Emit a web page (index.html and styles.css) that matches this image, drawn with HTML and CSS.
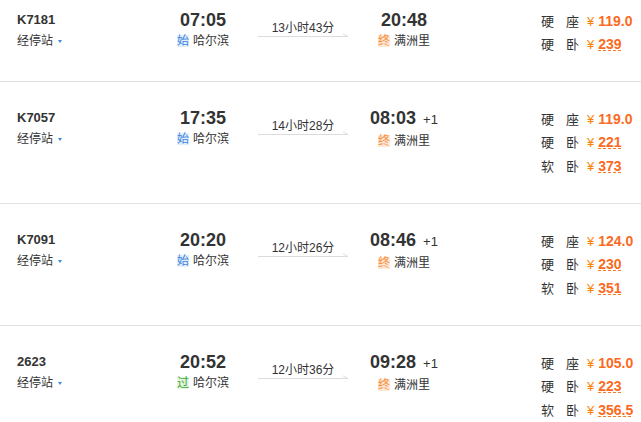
FILE: index.html
```html
<!DOCTYPE html>
<html lang="zh-CN">
<head>
<meta charset="utf-8">
<title>车次列表</title>
<link rel="stylesheet" href="styles.css">
</head>
<body>
<div class="list">

  <div class="row">
    <div class="train"><div class="num">K7181</div><div class="stops">经停站<span class="caret"></span></div></div>
    <div class="dep"><div class="time">07:05</div><div class="station"><span class="badge start">始</span>哈尔滨</div></div>
    <div class="dur"><div class="dur-text">13小时43分</div><svg class="dur-line" width="90" height="4" viewBox="0 0 90 4"><line x1="0" y1="3.5" x2="90" y2="3.5" stroke="#dcdcdc" stroke-width="1"/><line x1="85" y1="0.8" x2="90" y2="3.5" stroke="#dcdcdc" stroke-width="1"/></svg></div>
    <div class="arr"><div class="time">20:48</div><div class="station"><span class="badge end">终</span>满洲里</div></div>
    <div class="prices">
      <div class="price"><span class="seat">硬座</span><span class="yen">¥</span><span class="amt">119.0</span></div>
      <div class="price"><span class="seat">硬卧</span><span class="yen">¥</span><span class="amt u">239</span></div>
    </div>
  </div>

  <div class="row">
    <div class="train"><div class="num">K7057</div><div class="stops">经停站<span class="caret"></span></div></div>
    <div class="dep"><div class="time">17:35</div><div class="station"><span class="badge start">始</span>哈尔滨</div></div>
    <div class="dur"><div class="dur-text">14小时28分</div><svg class="dur-line" width="90" height="4" viewBox="0 0 90 4"><line x1="0" y1="3.5" x2="90" y2="3.5" stroke="#dcdcdc" stroke-width="1"/><line x1="85" y1="0.8" x2="90" y2="3.5" stroke="#dcdcdc" stroke-width="1"/></svg></div>
    <div class="arr"><div class="time">08:03<span class="plus">+1</span></div><div class="station"><span class="badge end">终</span>满洲里</div></div>
    <div class="prices">
      <div class="price"><span class="seat">硬座</span><span class="yen">¥</span><span class="amt">119.0</span></div>
      <div class="price"><span class="seat">硬卧</span><span class="yen">¥</span><span class="amt u">221</span></div>
      <div class="price"><span class="seat">软卧</span><span class="yen">¥</span><span class="amt u">373</span></div>
    </div>
  </div>

  <div class="row">
    <div class="train"><div class="num">K7091</div><div class="stops">经停站<span class="caret"></span></div></div>
    <div class="dep"><div class="time">20:20</div><div class="station"><span class="badge start">始</span>哈尔滨</div></div>
    <div class="dur"><div class="dur-text">12小时26分</div><svg class="dur-line" width="90" height="4" viewBox="0 0 90 4"><line x1="0" y1="3.5" x2="90" y2="3.5" stroke="#dcdcdc" stroke-width="1"/><line x1="85" y1="0.8" x2="90" y2="3.5" stroke="#dcdcdc" stroke-width="1"/></svg></div>
    <div class="arr"><div class="time">08:46<span class="plus">+1</span></div><div class="station"><span class="badge end">终</span>满洲里</div></div>
    <div class="prices">
      <div class="price"><span class="seat">硬座</span><span class="yen">¥</span><span class="amt">124.0</span></div>
      <div class="price"><span class="seat">硬卧</span><span class="yen">¥</span><span class="amt u">230</span></div>
      <div class="price"><span class="seat">软卧</span><span class="yen">¥</span><span class="amt u">351</span></div>
    </div>
  </div>

  <div class="row">
    <div class="train"><div class="num">2623</div><div class="stops">经停站<span class="caret"></span></div></div>
    <div class="dep"><div class="time">20:52</div><div class="station"><span class="badge pass">过</span>哈尔滨</div></div>
    <div class="dur"><div class="dur-text">12小时36分</div><svg class="dur-line" width="90" height="4" viewBox="0 0 90 4"><line x1="0" y1="3.5" x2="90" y2="3.5" stroke="#dcdcdc" stroke-width="1"/><line x1="85" y1="0.8" x2="90" y2="3.5" stroke="#dcdcdc" stroke-width="1"/></svg></div>
    <div class="arr"><div class="time">09:28<span class="plus">+1</span></div><div class="station"><span class="badge end">终</span>满洲里</div></div>
    <div class="prices">
      <div class="price"><span class="seat">硬座</span><span class="yen">¥</span><span class="amt">105.0</span></div>
      <div class="price"><span class="seat">硬卧</span><span class="yen">¥</span><span class="amt u">223</span></div>
      <div class="price"><span class="seat">软卧</span><span class="yen">¥</span><span class="amt u">356.5</span></div>
    </div>
  </div>

</div>
</body>
</html>
```

FILE: styles.css
```css
html, body {
  margin: 0;
  padding: 0;
  background: #fff;
  overflow: hidden;
}

body {
  font-family: "Liberation Sans", "Noto Sans CJK SC", sans-serif;
  color: #333;
}

.list {
  margin-top: -16px;
}

.row {
  display: flex;
  align-items: flex-start;
  padding: 25px 0 24px;
  border-bottom: 1px solid #e2e2e2;
}

.train {
  width: 153px;
  padding-left: 17px;
  box-sizing: border-box;
}

.num {
  font-size: 13px;
  font-weight: bold;
  line-height: 22px;
}

.stops {
  display: flex;
  align-items: center;
  font-size: 12px;
  line-height: 20px;
}

.caret {
  width: 0;
  height: 0;
  margin-left: 5px;
  border-left: 2.5px solid transparent;
  border-right: 2.5px solid transparent;
  border-top: 3px solid #3a8ce0;
}

.dep {
  width: 100px;
  text-align: center;
}

.arr {
  width: 102px;
  text-align: center;
}

.time {
  font-size: 18px;
  font-weight: bold;
  line-height: 22px;
  white-space: nowrap;
}

.plus {
  font-size: 13px;
  font-weight: normal;
  margin-left: 7px;
}

.station {
  display: flex;
  justify-content: center;
  align-items: center;
  font-size: 12px;
  line-height: 20px;
}

.badge {
  width: 12px;
  height: 12px;
  line-height: 12px;
  font-size: 12px;
  text-align: center;
  margin-right: 4px;
}

.badge.start {
  background: #e4eefa;
  color: #3b86e0;
}

.badge.end {
  background: #fde8d8;
  color: #f7913d;
}

.badge.pass {
  background: #e6f4e0;
  color: #38a838;
}

.dur {
  width: 100px;
  padding-top: 12px;
  display: flex;
  flex-direction: column;
  align-items: center;
}

.dur-text {
  font-size: 12px;
  line-height: 14px;
}

.dur-line {
  display: block;
  margin-top: -2px;
}

.prices {
  margin-left: 86px;
}

.price {
  display: flex;
  align-items: baseline;
  height: 24px;
  line-height: 24px;
}

.seat {
  width: 38px;
  font-size: 13px;
  text-align: justify;
  text-align-last: justify;
}

.yen {
  font-size: 13px;
  color: #fc8302;
  margin-left: 8px;
  margin-right: 4px;
}

.amt {
  font-size: 14px;
  font-weight: bold;
  color: #fc6a22;
}

.amt.u {
  display: inline-block;
  line-height: 14px;
  background: repeating-linear-gradient(to right, #fc7a22 0 3px, transparent 3px 5px) left bottom / 100% 1px no-repeat;
}
```
